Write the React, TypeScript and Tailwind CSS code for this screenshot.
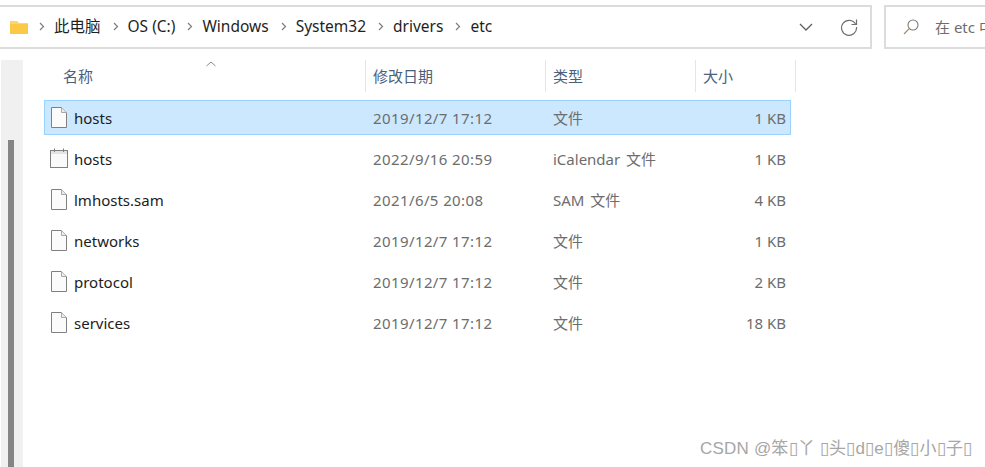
const FONT = "font-['Noto_Sans','Noto_Sans_CJK_SC',sans-serif]";

function FileIcon() {
  return (
    <svg width="18" height="21" viewBox="0 0 18 21" className="shrink-0">
      <path d="M1.5 0.5H11.5L16.5 5.5V20.5H1.5Z" fill="#fbfbfb" stroke="#808080" />
      <path d="M11.5 0.5V5.5H16.5" fill="#ececec" stroke="#a8a8a8" />
    </svg>
  );
}

function CalIcon() {
  return (
    <svg width="18" height="21" viewBox="0 0 18 21" className="shrink-0">
      <rect x="0.5" y="2.5" width="17" height="17" fill="#fafafa" stroke="#808080" />
      <rect x="1" y="3" width="16" height="3" fill="#e4e4e4" />
      <path d="M4.5 0.5V4M13.5 0.5V4" stroke="#808080" />
    </svg>
  );
}

function Chevron() {
  return (
    <svg width="6" height="9" viewBox="0 0 6 9" className="shrink-0">
      <path d="M1 1L4.5 4.5L1 8" fill="none" stroke="#7d7d7d" strokeWidth="1.2" />
    </svg>
  );
}

const rows = [
  { name: "hosts", date: "2019/12/7 17:12", type: "文件", size: "1 KB", selected: true, cal: false },
  { name: "hosts", date: "2022/9/16 20:59", type: "iCalendar 文件", size: "1 KB", selected: false, cal: true },
  { name: "lmhosts.sam", date: "2021/6/5 20:08", type: "SAM 文件", size: "4 KB", selected: false, cal: false },
  { name: "networks", date: "2019/12/7 17:12", type: "文件", size: "1 KB", selected: false, cal: false },
  { name: "protocol", date: "2019/12/7 17:12", type: "文件", size: "2 KB", selected: false, cal: false },
  { name: "services", date: "2019/12/7 17:12", type: "文件", size: "18 KB", selected: false, cal: false },
];

const crumbs = ["此电脑", "OS (C:)", "Windows", "System32", "drivers", "etc"];

export default function App() {
  return (
    <div className={`relative w-[985px] h-[467px] overflow-hidden bg-white text-[15px] ${FONT}`}>
      <div className="flex h-[49px] pt-[5px] gap-[12px]">
        <div className="w-[872px] h-[44px] shrink-0 border-y-2 border-r-2 border-[#dcdcdc] flex items-center pl-[10px]">
          <svg width="18" height="14" viewBox="0 0 18 14" className="shrink-0">
            <path d="M0 1H7L9 3H18V14H0Z" fill="#fcd668" />
            <path d="M0 4H18V14H0Z" fill="#fbc945" />
          </svg>
          <div className="flex items-center ml-[11px] text-[#1f1f1f] text-[15.5px] pb-[2px]">
            {crumbs.map((c) => (
              <div key={c} className="flex items-center gap-[9px] mr-[9px]">
                <Chevron />
                <span className="leading-[20px] mr-[3px]">{c}</span>
              </div>
            ))}
          </div>
          <div className="ml-auto flex items-center">
            <svg width="14" height="8" viewBox="0 0 14 8">
              <path d="M1 1L7 7L13 1" fill="none" stroke="#5f5f5f" strokeWidth="1.3" />
            </svg>
            <svg width="18" height="18" viewBox="0 0 18 18" className="ml-[27px] mr-[12px]">
              <path d="M15.6 6.2A7.5 7.5 0 1 0 16.5 9" fill="none" stroke="#6f6f6f" strokeWidth="1.2" />
              <path d="M16.5 1.5V6.5H11.5" fill="none" stroke="#6f6f6f" strokeWidth="1.2" />
            </svg>
          </div>
        </div>
        <div className="flex-1 h-[44px] border-y-2 border-l-2 border-[#dcdcdc] flex items-center pl-[17px] text-[#6d6d6d] whitespace-nowrap overflow-hidden">
          <svg width="16" height="16" viewBox="0 0 16 16" className="shrink-0">
            <circle cx="10" cy="6" r="5" fill="none" stroke="#7d7d7d" strokeWidth="1.1" />
            <path d="M6.3 9.7L1 15" stroke="#a88a6a" strokeWidth="1.2" />
          </svg>
          <span className="ml-[16px]">在 etc 中搜索</span>
        </div>
      </div>

      <div className="flex h-[407px] mt-[11px]">
        <div className="w-[21px] ml-[1px] bg-[#f0f0f0] shrink-0 pt-[80px] pl-[7px]">
          <div className="w-[6px] h-full bg-[#858585]" />
        </div>
        <div className="w-px bg-[#f2f2f2] shrink-0" />
        <div className="flex-1 pl-[22px]">
          <div className="relative flex h-[32px] text-[#4c607a] items-center">
            <div className="w-[320px] pl-[18px]">名称</div>
            <div className="w-[180px] h-full border-l border-[#e5e5e5] pl-[7px] flex items-center">修改日期</div>
            <div className="w-[150px] h-full border-l border-[#e5e5e5] pl-[7px] flex items-center">类型</div>
            <div className="w-[101px] h-full border-x border-[#e5e5e5] pl-[7px] flex items-center">大小</div>
            <svg width="10" height="6" viewBox="0 0 10 6" className="absolute left-[161px] top-[1px]">
              <path d="M0.5 5L5 1L9.5 5" fill="none" stroke="#8a8a8a" />
            </svg>
          </div>
          <div className="mt-[8px] flex flex-col gap-[6px]">
            {rows.map((r, i) => (
              <div
                key={i}
                className={`flex items-center h-[35px] w-[747px] -ml-px pl-px border ${r.selected ? "bg-[#cce8ff] border-[#99d1ff]" : "border-transparent"}`}
              >
                <div className="w-[327px] flex items-center pl-[4px] gap-[6px] text-[#1c1c1c]">
                  {r.cal ? <CalIcon /> : <FileIcon />}
                  <span className="pt-[1px]">{r.name}</span>
                </div>
                <div className="w-[180px] pt-[1px] tracking-[0.4px] text-[#6d6d6d]">{r.date}</div>
                <div className="w-[150px] pt-[1px] [word-spacing:2px] text-[#6d6d6d]">{r.type}</div>
                <div className="flex-1 pt-[1px] text-right pr-[4px] text-[#6d6d6d]">{r.size}</div>
              </div>
            ))}
          </div>
        </div>
      </div>

      <div className="absolute left-[700px] top-[437px] text-[17px] tracking-[0.2px] leading-[24px] text-[#a6a6a6] whitespace-nowrap font-['Liberation_Sans','Noto_Sans_CJK_SC',sans-serif]">
        CSDN @笨▯丫 ▯头▯d▯e▯傻▯小▯子▯
      </div>
    </div>
  );
}
